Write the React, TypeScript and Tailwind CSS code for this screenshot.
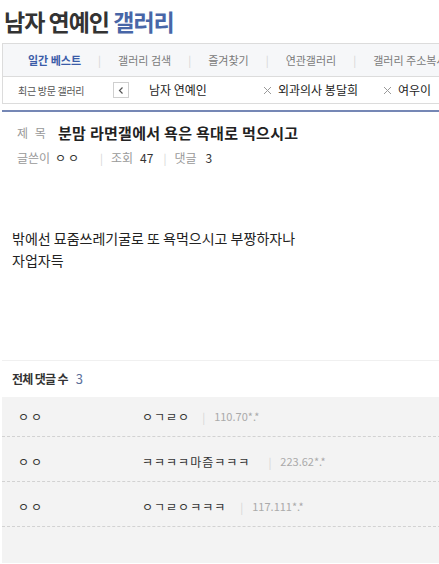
import React from "react";

const font = { fontFamily: '"Noto Sans CJK KR", "Noto Sans", sans-serif' };

function XMark() {
  return (
    <svg width="9" height="9" viewBox="0 0 9 9" className="shrink-0">
      <path d="M1 1L8 8M8 1L1 8" stroke="#9a9a9a" strokeWidth="1" />
    </svg>
  );
}

function Sep() {
  return <span className="text-[#d5d5d5] text-[11px]">|</span>;
}

const tabs = ["일간 베스트", "갤러리 검색", "즐겨찾기", "연관갤러리", "갤러리 주소복사"];

const comments = [
  { name: "ㅇㅇ", text: "ㅇㄱㄹㅇ", ip: "110.70*.*", gap: "ml-[12px]" },
  { name: "ㅇㅇ", text: "ㅋㅋㅋㅋ마즘ㅋㅋㅋ", ip: "223.62*.*", gap: "ml-[18px]" },
  { name: "ㅇㅇ", text: "ㅇㄱㄹㅇㅋㅋㅋ", ip: "117.111*.*", gap: "ml-[14px]" },
];

export default function App() {
  return (
    <div className="w-full h-[564px] overflow-hidden bg-white text-[#333]" style={font}>
      <div className="ml-[2px] w-[860px]">
        {/* gallery title */}
        <div className="h-[43px] flex items-center pl-[2px]">
          <h1 className="text-[23px] font-bold tracking-[-1px] leading-none whitespace-nowrap">
            <span className="text-[#333]">남자 연예인 </span>
            <span className="text-[#4866a7]">갤러리</span>
          </h1>
        </div>

        {/* tab bar */}
        <div className="h-[34px] border-t border-b border-l border-[#dcdcdc] bg-[#f6f7f9] flex items-center pl-[25px] gap-[17px] text-[11px]">
          {tabs.map((t, i) => (
            <React.Fragment key={t}>
              {i > 0 && <Sep />}
              <span className={i === 0 ? "font-bold text-[#3b5ca8] whitespace-nowrap" : "text-[#7a7a7a] whitespace-nowrap"}>{t}</span>
            </React.Fragment>
          ))}
        </div>

        {/* recent galleries */}
        <div className="h-[27px] border-b border-l border-[#dcdcdc] flex items-center">
          <span className="pl-[15px] w-[110px] text-[10px] tracking-[-0.3px] text-[#555] whitespace-nowrap">최근 방문 갤러리</span>
          <span className="w-[16px] h-[16px] border border-[#cfcfcf] flex items-center justify-center">
            <svg width="6" height="7" viewBox="0 0 6 7">
              <path d="M4.5 0.5L1.5 3.5L4.5 6.5" stroke="#555" strokeWidth="1.2" fill="none" />
            </svg>
          </span>
          <span className="ml-[20px] w-[114px] text-[12px] text-[#222] whitespace-nowrap">남자 연예인</span>
          <span className="w-[120px] flex items-center gap-[6px] text-[12px] text-[#222] whitespace-nowrap">
            <XMark />
            외과의사 봉달희
          </span>
          <span className="w-[120px] flex items-center gap-[6px] text-[12px] text-[#222] whitespace-nowrap">
            <XMark />
            여우이
          </span>
        </div>

        <div className="mt-[6px] h-[2px] bg-[#7587b5]" />

        {/* post header */}
        <div className="pl-[15px] pt-[11px] h-[20px] box-content flex items-center">
          <span className="w-[41px] text-[12px] text-[#999] tracking-[2px]">제 목</span>
          <span className="text-[15px] font-bold text-[#222] tracking-[0.3px] whitespace-nowrap">분맘 라면갤에서 욕은 욕대로 먹으시고</span>
        </div>
        <div className="pl-[15px] mt-[5px] h-[20px] flex items-center text-[12px]">
          <span className="text-[#999] w-[38px]">글쓴이</span>
          <span className="text-[#333] w-[45px] tracking-[2px]">ㅇㅇ</span>
          <Sep />
          <span className="text-[#999] ml-[8px]">조회</span>
          <span className="text-[#333] ml-[7px]">47</span>
          <span className="ml-[10px]"><Sep /></span>
          <span className="text-[#999] ml-[8px]">댓글</span>
          <span className="text-[#333] ml-[9px]">3</span>
        </div>

        {/* body */}
        <div className="mt-[59px] pl-[10px] text-[14px] leading-[22px] text-[#222]">
          <p>밖에선 묘줌쓰레기굴로 또 욕먹으시고 부짱하자나</p>
          <p>자업자득</p>
        </div>

        <div className="mt-[89px] h-px bg-[#f0f0f0]" />

        {/* comments */}
        <div className="h-[36px] flex items-center pl-[10px] text-[12px]">
          <span className="font-bold text-[#333] tracking-[-0.7px]">전체 댓글 수</span>
          <span className="ml-[8px] text-[13px] text-[#5b6f9a]">3</span>
        </div>
        <div className="bg-[#f3f3f3] h-[166px]">
          {comments.map((c, i) => (
            <div
              key={i}
              className={
                "flex items-center border-b border-dashed border-[#d2d2d2] text-[12px] " +
                (i === 0 ? "h-[40px]" : "h-[45px] pt-[5px]")
              }
            >
              <span className="pl-[16px] w-[140px] tracking-[2px] text-[#333]">{c.name}</span>
              <span className="text-[#333] tracking-[1px]">{c.text}</span>
              <span className={c.gap}><Sep /></span>
              <span className="ml-[9px] text-[11px] text-[#aaa]">{c.ip}</span>
            </div>
          ))}
        </div>
      </div>
    </div>
  );
}
